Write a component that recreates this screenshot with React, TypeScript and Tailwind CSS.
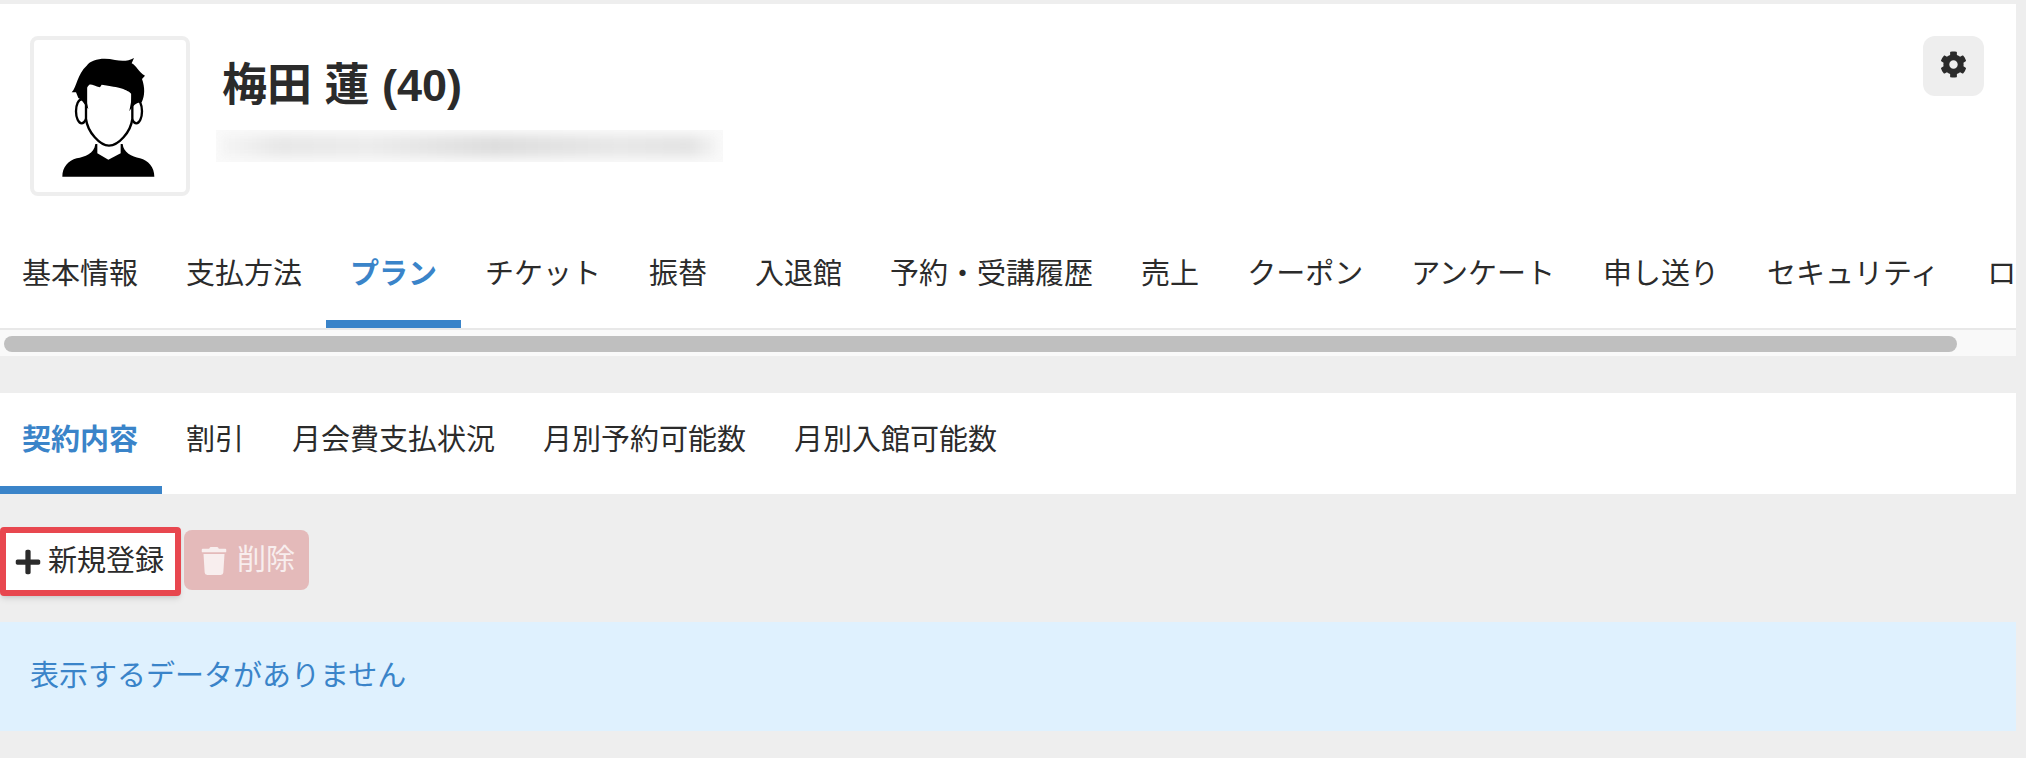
import { FaCog, FaPlus, FaTrash } from "react-icons/fa"

const MAIN_TABS = [
  "基本情報",
  "支払方法",
  "プラン",
  "チケット",
  "振替",
  "入退館",
  "予約・受講履歴",
  "売上",
  "クーポン",
  "アンケート",
  "申し送り",
  "セキュリティ",
  "ログ",
]

const SUB_TABS = ["契約内容", "割引", "月会費支払状況", "月別予約可能数", "月別入館可能数"]

function Avatar() {
  return (
    <svg viewBox="42 48 456 456" className="h-full w-full">
      <path
        d="M127 458C127 430 145 410 170 403C195 398 222 390 226 360L308 360C310 385 335 398 360 403C385 410 403 430 403 458Z"
        fill="#000"
      />
      <path d="M232 345L232 388L265 407L302 388L302 345Z" fill="#fff" />
      <ellipse cx="185" cy="262" rx="17" ry="36" fill="#fff" stroke="#000" strokeWidth="7" />
      <ellipse cx="349" cy="262" rx="17" ry="36" fill="#fff" stroke="#000" strokeWidth="7" />
      <path
        d="M198 170L198 285C203 325 240 365 267 365C295 365 332 325 337 285L337 170Z"
        fill="#fff"
        stroke="#000"
        strokeWidth="7"
      />
      <path
        d="M155 205C170 190 172 150 200 125C215 105 250 100 285 108C305 112 325 112 342 102L335 118C350 125 355 145 375 155L366 165C375 190 375 215 365 235C352 233 338 245 328 262C332 240 336 225 335 210C320 195 300 190 245 182L240 190C225 186 215 180 208 182C195 195 197 205 197 220L205 255C195 245 190 230 175 222L168 205Z"
        fill="#000"
      />
    </svg>
  )
}

function TabLabel({ label, active }: { label: string; active: boolean }) {
  return (
    <div
      className={`flex h-[101px] shrink-0 items-center whitespace-nowrap border-b-8 px-6 pt-[2px] text-[29px] ${
        active ? "border-[#3a84c9] font-bold text-[#3a84c9]" : "border-transparent text-[#2b2b2b]"
      }`}
    >
      {label}
    </div>
  )
}

export default function App() {
  return (
    <div className="min-h-[758px] overflow-hidden bg-[#eeeeee] pt-1 font-['Liberation_Sans','Noto_Sans_CJK_JP',sans-serif]">
      <div className="mr-[10px] bg-white">
        {/* Profile header */}
        <div className="flex items-start justify-between pb-[31px] pl-[30px] pr-8 pt-8">
          <div className="flex items-start">
            <div className="h-40 w-40 rounded-lg border-4 border-[#eeeeee] bg-white">
              <Avatar />
            </div>
            <div className="ml-[32px]">
              <h1 className="mt-[17px] h-[66px] text-[45px] font-bold leading-[66px] text-[#2b2b2b]">梅田 蓮 (40)</h1>
              <div className="-ml-[6px] mt-[11px] h-8 w-[507px] overflow-hidden bg-[#fafafa]">
                <div className="mx-1 mt-[5px] h-[22px] bg-[linear-gradient(90deg,#f6f6f6_0%,#e8e8e8_12%,#ececec_30%,#dedede_55%,#e8e8e8_80%,#e4e4e4_94%,#f6f6f6_100%)] blur-[5px]" />
              </div>
            </div>
          </div>
          <button className="flex h-[60px] w-[61px] items-center justify-center rounded-xl bg-[#eeeeee] pb-1 text-[27px] text-[#2b2b2b]">
            <FaCog />
          </button>
        </div>

        {/* Main tabs */}
        <div className="-ml-[2px] flex overflow-hidden">
          {MAIN_TABS.map((tab) => (
            <TabLabel key={tab} label={tab} active={tab === "プラン"} />
          ))}
        </div>

        {/* Scrollbar */}
        <div className="h-[28px] border-t-2 border-[#e8e8e8] bg-[#f9f9f9] pl-1 pt-[6px]">
          <div className="h-4 w-[1953px] rounded-full bg-[#bfbfbf]" />
        </div>
      </div>

      {/* Sub tabs */}
      <div className="mr-[10px] mt-[37px] overflow-hidden bg-white">
        <div className="-ml-[2px] flex">
          {SUB_TABS.map((tab) => (
            <TabLabel key={tab} label={tab} active={tab === "契約内容"} />
          ))}
        </div>
      </div>

      {/* Actions */}
      <div className="mt-[33px] flex items-start gap-[3px]">
        <button className="flex h-[69px] w-[181px] items-center gap-[6px] rounded border-[6px] border-[#e8474f] bg-white pl-2 text-[29px] text-[#2b2b2b] shadow-md">
          <FaPlus className="text-[28px]" />
          <span>新規登録</span>
        </button>
        <button className="mt-[3px] flex h-[60px] w-[125px] items-center gap-[9px] rounded-lg bg-[#e4baba] pl-[16px] pt-[2px] text-[29px] text-[#f8eeee]">
          <FaTrash className="text-[28px]" />
          <span>削除</span>
        </button>
      </div>

      {/* Empty state */}
      <div className="mr-[10px] mt-[26px] flex h-[109px] items-center bg-[#dff1fe] pl-[30px] text-[29px] text-[#3a84c9]">
        表示するデータがありません
      </div>
    </div>
  )
}
